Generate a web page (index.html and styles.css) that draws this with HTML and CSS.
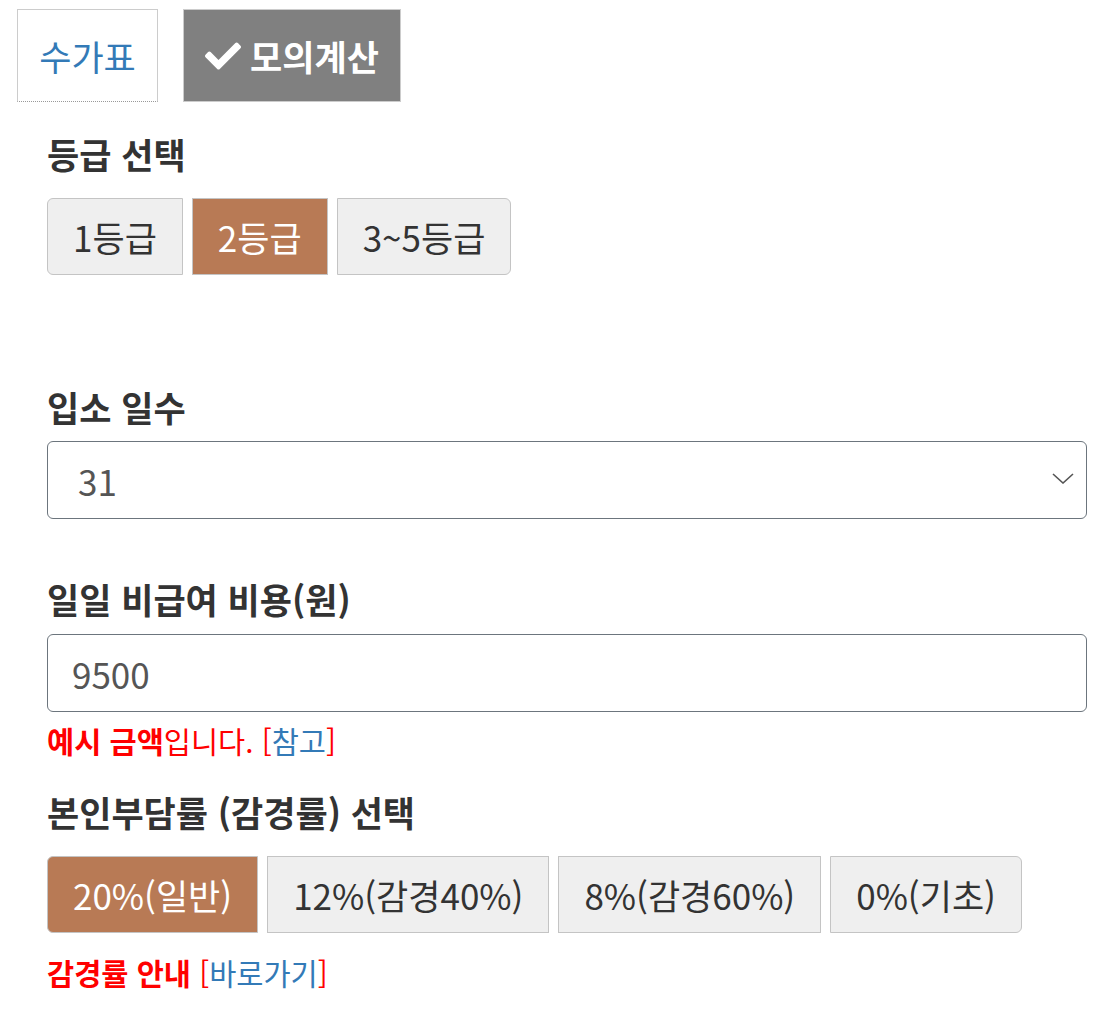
FILE: index.html
```html
<!DOCTYPE html>
<html lang="ko">
<head>
<meta charset="utf-8">
<link rel="stylesheet" href="styles.css">
</head>
<body>
<div class="tabs">
  <div class="tab tab-plain">수가표</div>
  <div class="tab tab-active">
    <svg class="check" viewBox="0 0 512 512" width="36" height="36"><path fill="#fff" d="M173.9 439.4L7.5 273c-10-10-10-26.2 0-36.2l36.2-36.2c10-10 26.2-10 36.2 0L192 312.7 432.1 72.6c10-10 26.2-10 36.2 0l36.2 36.2c10 10 10 26.2 0 36.2L210.1 439.4c-10 10-26.2 10-36.2 0z"/></svg>
    <span>모의계산</span>
  </div>
</div>
<div class="form">
  <section class="group grade">
    <h2 class="label">등급 선택</h2>
    <div class="btn-group">
      <button class="btn first">1등급</button>
      <button class="btn active">2등급</button>
      <button class="btn last">3~5등급</button>
    </div>
  </section>
  <section class="group days">
    <h2 class="label">입소 일수</h2>
    <div class="select">
      <span>31</span>
      <svg class="chev" viewBox="0 0 22 11" width="22" height="11"><path d="M1 1l10 9 10-9" fill="none" stroke="#555" stroke-width="1.6"/></svg>
    </div>
  </section>
  <section class="group cost">
    <h2 class="label">일일 비급여 비용(원)</h2>
    <div class="input">9500</div>
    <p class="note"><b>예시 금액</b>입니다. [<a>참고</a>]</p>
  </section>
  <section class="group rate">
    <h2 class="label">본인부담률 (감경률) 선택</h2>
    <div class="btn-group">
      <button class="btn first active">20%(일반)</button>
      <button class="btn">12%(감경40%)</button>
      <button class="btn">8%(감경60%)</button>
      <button class="btn last">0%(기초)</button>
    </div>
    <p class="note"><b>감경률 안내</b> [<a>바로가기</a>]</p>
  </section>
</div>
</body>
</html>
```
FILE: styles.css
```css
* { box-sizing: border-box; }
body {
  margin: 0;
  font-family: "Noto Sans CJK KR", "Noto Sans", sans-serif;
  color: #333;
  background: #fff;
}
.tabs {
  display: flex;
  gap: 25px;
  padding: 9px 0 0 17px;
}
.tab {
  height: 93px;
  display: flex;
  align-items: center;
  justify-content: center;
  font-size: 35px;
}
.tab-plain {
  width: 141px;
  border: 1px solid #ccc;
  border-bottom: 1px dotted #999;
  color: #337ab7;
}
.tab-active {
  width: 218px;
  background: #808080;
  border: 1px solid #ccc;
  color: #fff;
  font-weight: bold;
  gap: 9px;
}
.check { display: block; }
.form {
  padding: 0 24px 0 47px;
}
.label {
  margin: 0;
  font-size: 35px;
  font-weight: bold;
  color: #333;
  line-height: 50px;
}
.btn-group {
  display: flex;
  gap: 9px;
}
.btn {
  height: 77px;
  padding: 0 25px;
  font-family: inherit;
  font-size: 35px;
  color: #333;
  background: #efefef;
  border: 1px solid #c4c4c4;
  border-radius: 0;
}
.btn.first { border-radius: 6px 0 0 6px; }
.btn.last { border-radius: 0 6px 6px 0; }
.btn.active {
  background: #b87a55;
  color: #fff;
}
.grade { margin-top: 27px; }
.grade .label { margin-bottom: 19px; }
.days { margin-top: 107px; }
.days .label { margin-bottom: 9px; }
.cost { margin-top: 55px; }
.cost .label { margin-bottom: 10px; }
.rate { margin-top: 27px; }
.rate .label { margin-bottom: 19px; }
.select, .input {
  height: 78px;
  border: 1px solid #6c757d;
  border-radius: 6px;
  display: flex;
  align-items: center;
  font-size: 35px;
  color: #555;
}
.select { padding: 0 12px 0 30px; justify-content: space-between; }
.chev { display: block; margin-top: -4px; }
.input { padding-left: 24px; }
.note {
  margin: 8px 0 0;
  font-size: 29.5px;
  line-height: 40px;
  color: #f00;
}
.note b { font-weight: bold; }
.note a { color: #337ab7; }
.rate .note { margin-top: 19px; }
```
